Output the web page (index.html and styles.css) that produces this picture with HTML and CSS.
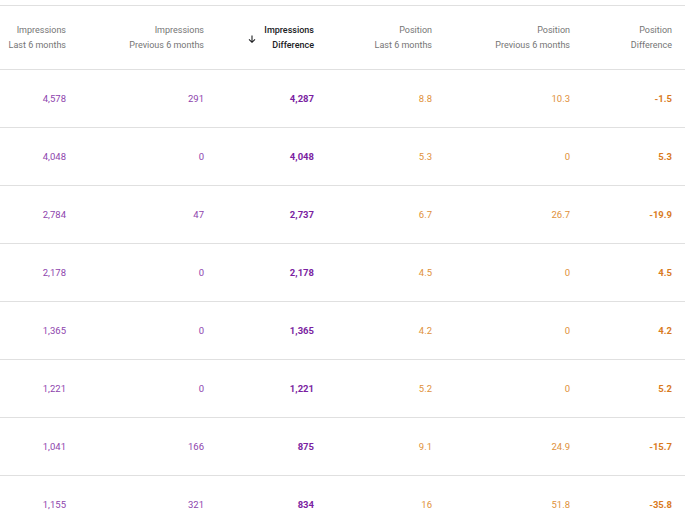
FILE: index.html
```html
<!DOCTYPE html>
<html>
<head>
<meta charset="utf-8">
<link rel="stylesheet" href="styles.css">
</head>
<body>
<div class="table">
  <div class="row head">
    <div class="cell"><span>Impressions<br>Last 6 months</span></div>
    <div class="cell"><span>Impressions<br>Previous 6 months</span></div>
    <div class="cell sorted">
      <svg class="arrow" width="8" height="8" viewBox="0 0 8 8"><path d="M4 0.5V7.2M1 4.3L4 7.3L7 4.3" fill="none" stroke="#202124" stroke-width="1.1"/></svg>
      <span>Impressions<br>Difference</span>
    </div>
    <div class="cell"><span>Position<br>Last 6 months</span></div>
    <div class="cell"><span>Position<br>Previous 6 months</span></div>
    <div class="cell"><span>Position<br>Difference</span></div>
  </div>
  <div class="row"><div class="cell imp">4,578</div><div class="cell imp">291</div><div class="cell imp b">4,287</div><div class="cell pos">8.8</div><div class="cell pos">10.3</div><div class="cell pos b">-1.5</div></div>
  <div class="row"><div class="cell imp">4,048</div><div class="cell imp">0</div><div class="cell imp b">4,048</div><div class="cell pos">5.3</div><div class="cell pos">0</div><div class="cell pos b">5.3</div></div>
  <div class="row"><div class="cell imp">2,784</div><div class="cell imp">47</div><div class="cell imp b">2,737</div><div class="cell pos">6.7</div><div class="cell pos">26.7</div><div class="cell pos b">-19.9</div></div>
  <div class="row"><div class="cell imp">2,178</div><div class="cell imp">0</div><div class="cell imp b">2,178</div><div class="cell pos">4.5</div><div class="cell pos">0</div><div class="cell pos b">4.5</div></div>
  <div class="row"><div class="cell imp">1,365</div><div class="cell imp">0</div><div class="cell imp b">1,365</div><div class="cell pos">4.2</div><div class="cell pos">0</div><div class="cell pos b">4.2</div></div>
  <div class="row"><div class="cell imp">1,221</div><div class="cell imp">0</div><div class="cell imp b">1,221</div><div class="cell pos">5.2</div><div class="cell pos">0</div><div class="cell pos b">5.2</div></div>
  <div class="row"><div class="cell imp">1,041</div><div class="cell imp">166</div><div class="cell imp b">875</div><div class="cell pos">9.1</div><div class="cell pos">24.9</div><div class="cell pos b">-15.7</div></div>
  <div class="row"><div class="cell imp">1,155</div><div class="cell imp">321</div><div class="cell imp b">834</div><div class="cell pos">16</div><div class="cell pos">51.8</div><div class="cell pos b">-35.8</div></div>
</div>
</body>
</html>
```
FILE: styles.css
```css
html, body {
  margin: 0;
  padding: 0;
  background: #ffffff;
  overflow: hidden;
}
body {
  font-family: Roboto, "Liberation Sans", Arial, sans-serif;
  width: 685px;
  height: 514px;
}
.table {
  margin-top: 5px;
  border-top: 1px solid #e0e0e0;
}
.row {
  display: grid;
  grid-template-columns: 66px 138px 110px 118px 138px 102px 13px;
  height: 57px;
  border-bottom: 1px solid #e0e0e0;
  align-items: center;
}
.row.head {
  height: 63px;
}
.cell {
  text-align: right;
  font-size: 9.5px;
  line-height: 15px;
  white-space: nowrap;
}
.head .cell {
  font-size: 9px;
  color: #757575;
  line-height: 15px;
}
.head .cell.sorted {
  display: flex;
  justify-content: flex-end;
  align-items: center;
  gap: 8px;
  color: #202124;
  font-weight: 500;
}
.arrow {
  display: block;
  margin-top: 3px;
}
.imp {
  color: #8e44ad;
}
.pos {
  color: #e0913a;
}
.imp.b {
  color: #7b1fa2;
  font-weight: 700;
}
.pos.b {
  color: #d97b1e;
  font-weight: 700;
}
```
